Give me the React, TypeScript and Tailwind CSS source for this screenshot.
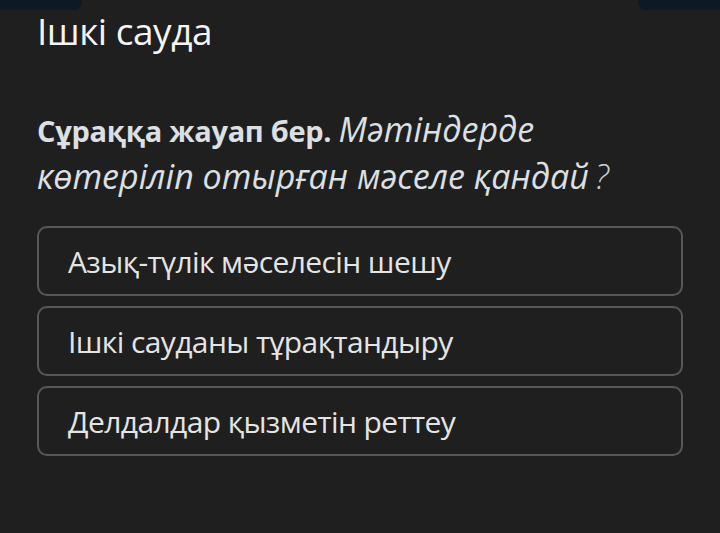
const options = ["Азық-түлік мәселесін шешу", "Ішкі сауданы тұрақтандыру", "Делдалдар қызметін реттеу"];

export default function App() {
  return (
    <div className="h-[533px] w-[720px] overflow-hidden bg-[#1f1f1f] font-['Open_Sans',sans-serif]">
      <div className="flex h-[10px] justify-between">
        <div className="w-[82px] rounded-br-[8px] bg-[#0b1a24]" />
        <div className="w-[82px] rounded-bl-[8px] bg-[#0b1a24]" />
      </div>
      <div className="px-[37px]">
        <h1 className="mt-[2px] text-[37px] leading-[38px] tracking-[-0.5px] text-[#f4f4f4]">Ішкі сауда</h1>
        <div className="mt-[56px] text-[34px] leading-[47px] text-[#dce0e4]">
          <p>
            <span className="text-[29px] font-bold leading-none tracking-[-0.3px]">Сұраққа жауап бер. </span>
            <span className="italic">Мәтіндерде</span>
          </p>
          <p className="italic">
            көтеріліп отырған мәселе қандай<span className="ml-[6px] font-light text-[#c9ced4]">?</span>
          </p>
        </div>
        <div className="mt-[26px] flex flex-col gap-[10px]">
          {options.map((item) => (
            <div
              key={item}
              className="flex h-[70px] items-center rounded-[10px] border-2 border-[#585858] px-[29px] text-[30px] tracking-[-0.6px] text-[#e4e4e4]"
            >
              {item}
            </div>
          ))}
        </div>
      </div>
    </div>
  );
}
